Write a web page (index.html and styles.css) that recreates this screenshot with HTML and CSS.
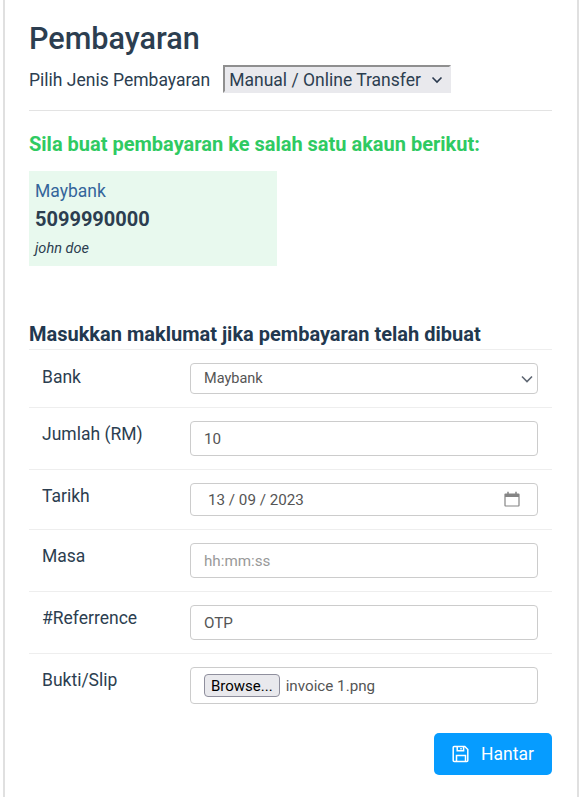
FILE: index.html
```html
<html lang="en">
<head>
  <meta charset="UTF-8">
  <title>Pembayaran</title>
  <meta name="viewport" content="width=device-width, initial-scale=1.0"/>
  <link rel="stylesheet" href="styles.css">
</head>
<body>
  <div class="card">
    <h1 class="title">Pembayaran</h1>
    <div class="type-row">
      <label class="type-label">Pilih Jenis Pembayaran</label>
      <div class="type-select">
        <select class="type-input">
          <option>Manual / Online Transfer</option>
        </select>
        <svg class="type-chevron" width="12" height="8" viewBox="0 0 12 8"><path d="M1.5 1.5 6 6l4.500-4.500" fill="none" stroke="#2b3a4f" stroke-width="1.600"/></svg>
      </div>
    </div>
    <hr class="rule">

    <h2 class="notice">Sila buat pembayaran ke salah satu akaun berikut:</h2>
    <div class="account">
      <div class="account-bank">Maybank</div>
      <div class="account-no">5099990000</div>
      <div class="account-name">john doe</div>
    </div>

    <h3 class="form-title">Masukkan maklumat jika pembayaran telah dibuat</h3>
    <form class="form">
      <div class="row">
        <label class="row-label">Bank</label>
        <div class="control-wrap">
          <select class="control control-select">
            <option>Maybank</option>
          </select>
          <svg class="select-chevron" width="12" height="8" viewBox="0 0 12 8"><path d="M1 1.500 6 6.500l5-5" fill="none" stroke="#5f6773" stroke-width="1.600"/></svg>
        </div>
      </div>
      <div class="row">
        <label class="row-label">Jumlah (RM)</label>
        <input class="control" type="text" value="10">
      </div>
      <div class="row">
        <label class="row-label">Tarikh</label>
        <div class="control-wrap">
          <input class="control control-date" type="text" value="13 / 09 / 2023">
          <svg class="date-icon" width="16" height="16" viewBox="0 0 16 16"><path d="M1.500 3h13a.5.5 0 0 1 .5.500v11a.5.5 0 0 1-.5.500h-13a.5.5 0 0 1-.5-.5v-11a.5.5 0 0 1 .5-.5Z" fill="none" stroke="#858585" stroke-width="1.200"/><path d="M1 3h14v3H1z" fill="#858585"/><path d="M4 .8v3M12 .8v3" stroke="#858585" stroke-width="1.500"/></svg>
        </div>
      </div>
      <div class="row">
        <label class="row-label">Masa</label>
        <input class="control" type="text" placeholder="hh:mm:ss">
      </div>
      <div class="row">
        <label class="row-label">#Referrence</label>
        <input class="control" type="text" value="OTP">
      </div>
      <div class="row row-last">
        <label class="row-label">Bukti/Slip</label>
        <div class="control control-file">
          <button type="button" class="browse">Browse...</button>
          <span class="file-name">invoice 1.png</span>
        </div>
      </div>
      <div class="actions">
        <button type="button" class="submit">
          <svg width="18" height="18" viewBox="0 0 18 18"><path d="M2.200 1.500h10.600l3 3v11a1 1 0 0 1-1 1H2.200a1 1 0 0 1-1-1v-13a1 1 0 0 1 1-1Z" fill="none" stroke="#fff" stroke-width="1.500"/><path d="M5.200 1.500v4.300h6.400V1.500M9 3v1.500M4.500 16.500v-6h9v6" fill="none" stroke="#fff" stroke-width="1.500"/></svg>
          Hantar
        </button>
      </div>
    </form>
  </div>
</body>
</html>
```

FILE: styles.css
```css
* {
  box-sizing: border-box;
}

body {
  margin: 0;
  background: #fff;
  color: #2c3e50;
  font-family: Roboto, "Liberation Sans", sans-serif;
  font-size: 16px;
}

.card {
  width: 576px;
  height: 797px;
  margin-left: 3px;
  padding: 21px 25px 0 24px;
  border-left: 2px solid #e0e0e0;
  border-right: 2px solid #e0e0e0;
  overflow: hidden;
}

.title {
  margin: 0;
  font-size: 30.600px;
  font-weight: 500;
  line-height: 36px;
  color: #2c3e50;
}

.type-row {
  display: flex;
  align-items: center;
  margin-top: 8px;
}

.type-label {
  padding-top: 1px;
  font-size: 17.500px;
  margin-right: 13px;
}

.type-select {
  position: relative;
}

.type-input {
  display: block;
  appearance: none;
  width: 228px;
  height: 28px;
  padding: 1px 0 0 4px;
  border: 2px solid #e9e9ed;
  border-top-color: #8f8f8f;
  border-left-color: #8f8f8f;
  border-radius: 0;
  background: #e9e9ed;
  color: #2c3e50;
  font-family: inherit;
  font-size: 17.500px;
}

.type-chevron {
  position: absolute;
  top: 11px;
  right: 8px;
}

.rule {
  margin: 17px 0 0;
  border: 0;
  border-top: 1px solid #e3e3e3;
}

.notice {
  margin: 20px 0 0;
  font-size: 20px;
  font-weight: 700;
  line-height: 26px;
  color: #2fca62;
}

.account {
  width: 248px;
  height: 95px;
  margin-top: 14px;
  padding: 8px 6px;
  background: #e8f9ee;
}

.account-bank {
  font-size: 17.500px;
  line-height: 24px;
  color: #34659b;
}

.account-no {
  font-size: 20px;
  font-weight: 700;
  line-height: 32px;
}

.account-name {
  padding-top: 1px;
  font-size: 14.500px;
  font-style: italic;
  line-height: 26px;
}

.form-title {
  margin: 55px 0 0;
  font-size: 20px;
  font-weight: 700;
  line-height: 26px;
  color: #22384f;
}

.form {
  margin: 2px 0 0;
}

.row {
  display: flex;
  align-items: flex-start;
  padding: 13px 14px 13px 13px;
  border-top: 1px solid #eee;
}

.row:first-child .row-label {
  padding-top: 1px;
}

.row-label {
  flex: 0 0 148px;
  font-size: 17.500px;
  line-height: 27px;
}

.control-wrap {
  position: relative;
  flex: 1;
  display: block;
}

.control {
  display: block;
  flex: 1;
  width: 100%;
  height: 35px;
  padding: 0 13px;
  border: 1px solid #ccc;
  border-radius: 4px;
  background: #fff;
  color: #555;
  font-family: inherit;
  font-size: 15.200px;
}

.control::placeholder {
  color: #999;
  opacity: 1;
}

.control-select {
  appearance: none;
  height: 31px;
  font-size: 14.500px;
}

.control-date {
  height: 33px;
  padding-left: 17px;
}

.control-file {
  display: flex;
  align-items: center;
  height: 37px;
}

.select-chevron {
  position: absolute;
  top: 12px;
  right: 5px;
}

.date-icon {
  position: absolute;
  top: 8px;
  right: 18px;
}

.browse {
  height: 23px;
  margin-right: 6px;
  padding: 0 6px;
  border: 1px solid #8f8f9d;
  border-radius: 4px;
  background: #e9e9ed;
  color: #000;
  font-family: inherit;
  font-size: 15px;
}

.file-name {
  font-size: 15.200px;
}

.actions {
  display: flex;
  justify-content: flex-end;
  margin-top: 16px;
}

.submit {
  display: flex;
  align-items: center;
  justify-content: center;
  gap: 11px;
  width: 118px;
  height: 42px;
  padding-top: 1px;
  border: 0;
  border-radius: 5px;
  background: #069cff;
  color: #fff;
  font-family: inherit;
  font-size: 17.500px;
}
```
